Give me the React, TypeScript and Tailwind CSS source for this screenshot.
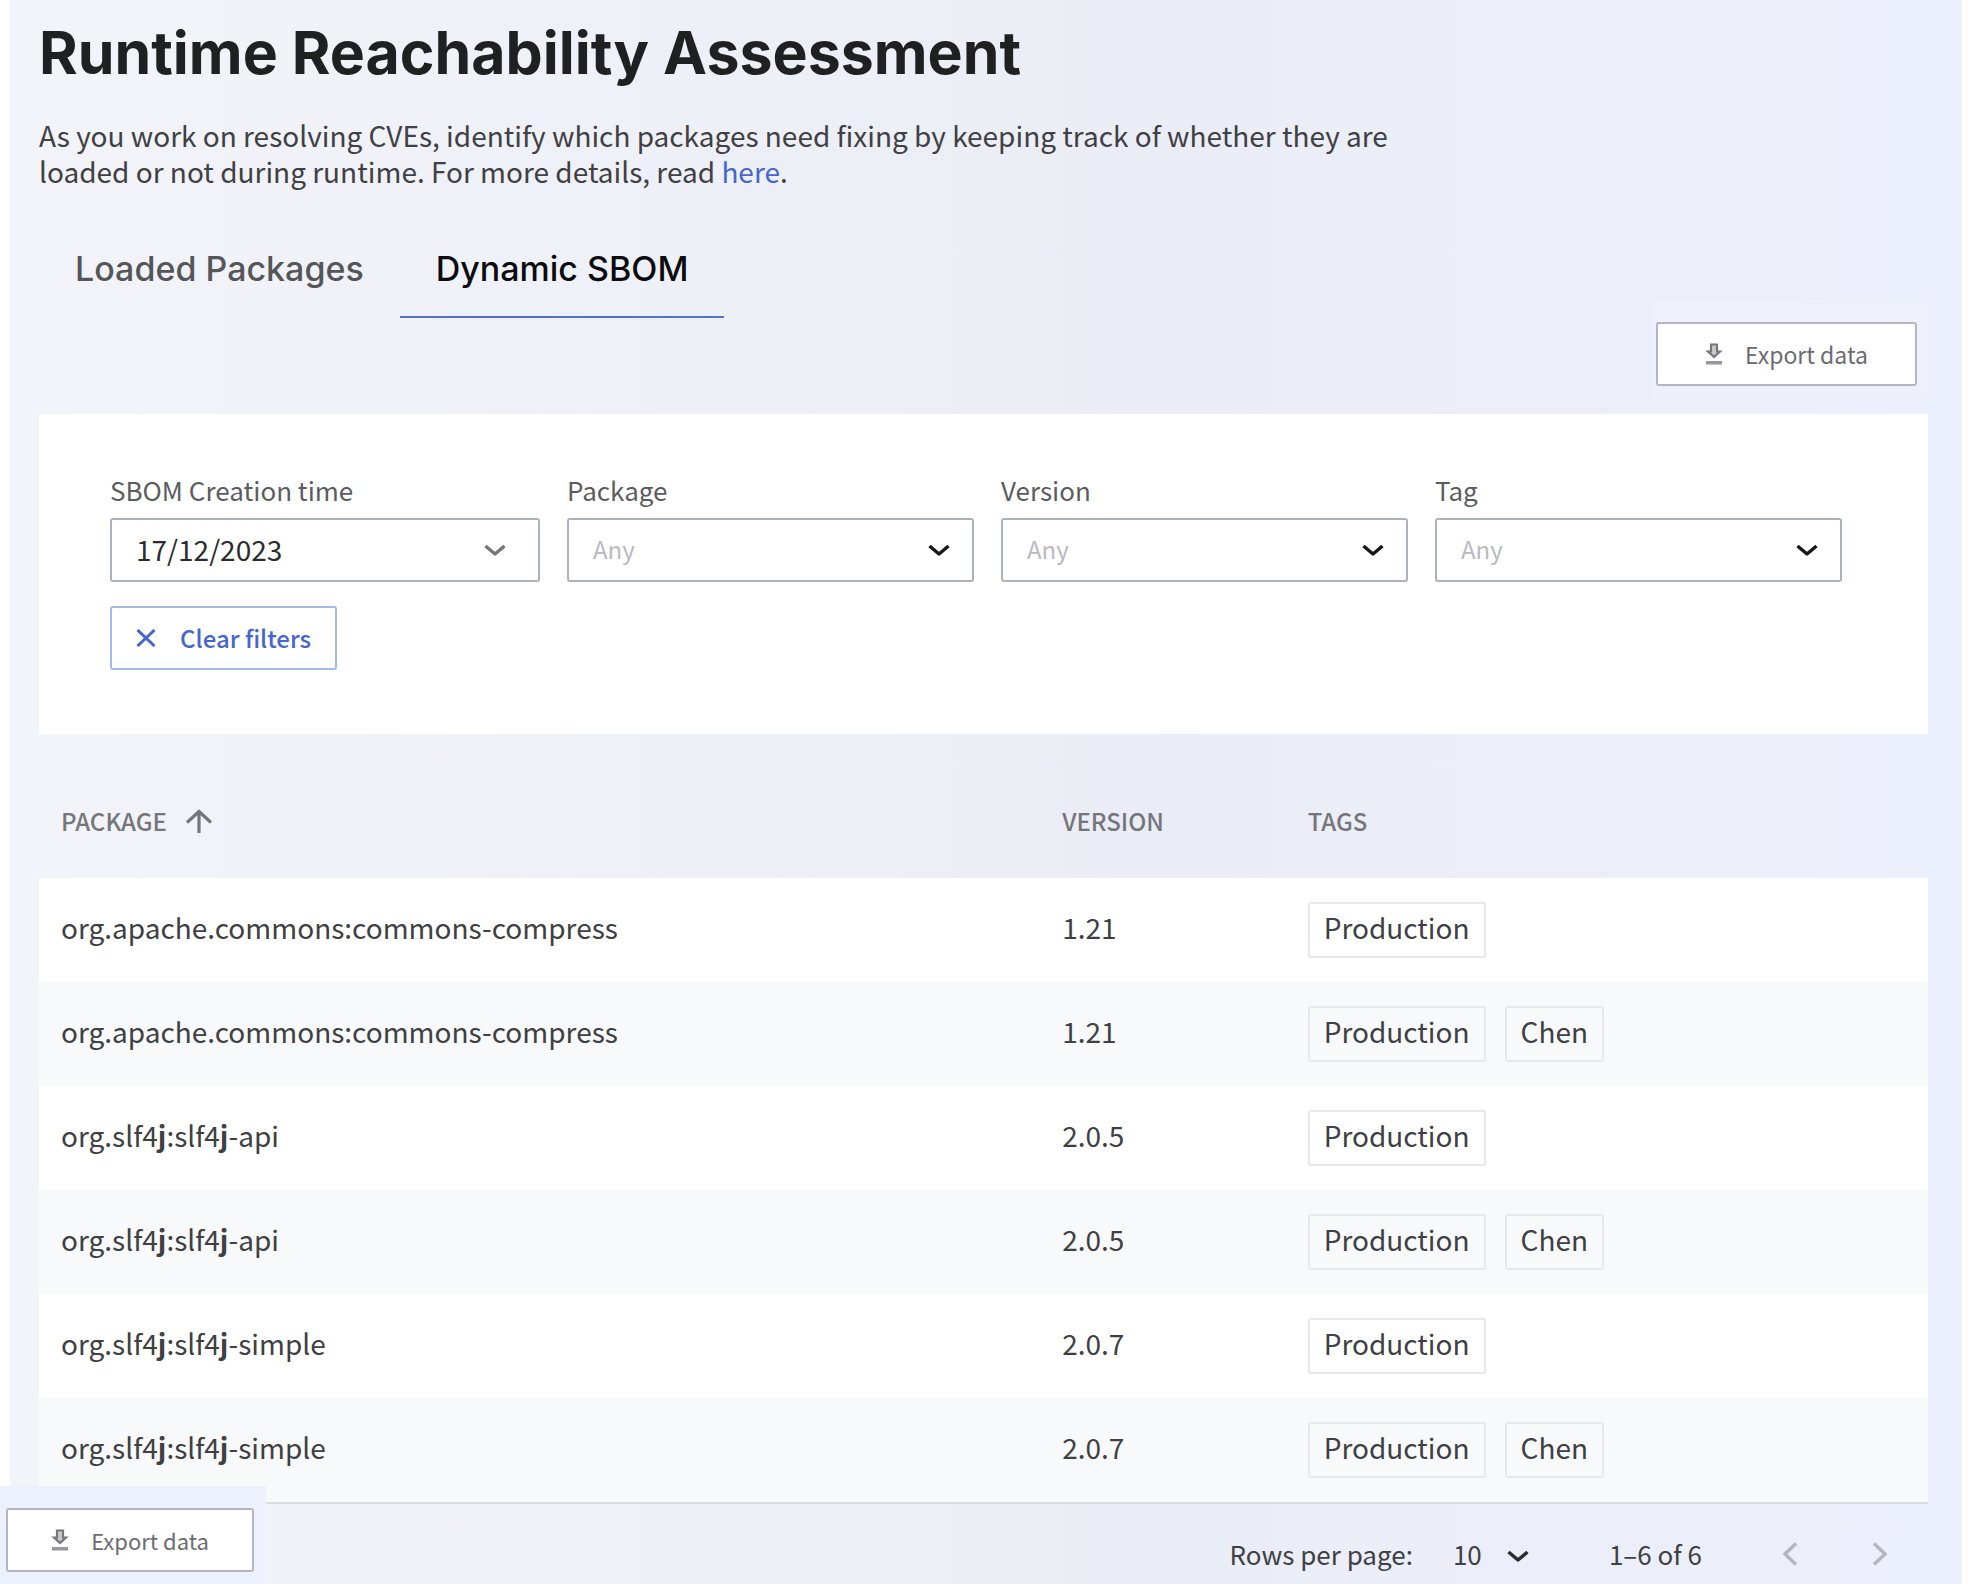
import { useState, type ReactNode } from "react";

const cjk = "font-['Noto_Sans_CJK_SC',sans-serif]";

function ChevronDown({ className }: { className: string }) {
  return (
    <svg
      viewBox="0 0 22 13"
      fill="none"
      stroke="currentColor"
      strokeWidth="3.5"
      className={`pointer-events-none absolute h-[13px] w-[22px] ${className}`}
      aria-hidden="true"
    >
      <path d="M1.500 2 11 10 20.500 2" strokeLinejoin="round" />
    </svg>
  );
}

function DownloadIcon() {
  return (
    <svg viewBox="0 0 18 24" className="h-6 w-[18px] shrink-0" aria-hidden="true">
      <path d="M6 2.500h6v7h3L9 15 3 9.500h3z" fill="#c9c9cd" stroke="#77777b" strokeWidth="2.200" />
      <path d="M1 19h16v3.500H1z" fill="#97979b" />
    </svg>
  );
}

function ExportButton({ className }: { className: string }) {
  return (
    <button
      type="button"
      className={`flex h-16 items-center justify-center gap-[22px] rounded-[3px] border-2 border-[#b5b4c2] bg-white leading-7 text-[#6c6c70] ${className}`}
    >
      <DownloadIcon />
      <span>Export data</span>
    </button>
  );
}

function Filter({ id, label, value, dark }: { id: string; label: string; value: string; dark?: boolean }) {
  return (
    <div className="flex min-w-0 flex-col gap-2.5">
      <label htmlFor={id} className="text-[26px] leading-9 text-[#5c5c60]">
        {label}
      </label>
      <div className="relative">
        <select
          id={id}
          className={`h-16 w-full appearance-none rounded-[3px] border-2 border-[#adb0be] bg-white px-6 pb-0.5 ${dark ? "text-[28px] text-[#2b2b2d]" : "text-2xl text-[#b9b9c2]"}`}
        >
          <option>{value}</option>
        </select>
        <ChevronDown className={`top-[26px] ${dark ? "right-[34px] text-[#77777b]" : "right-6 text-[#18181a]"}`} />
      </div>
    </div>
  );
}

function Tab({ active, onClick, children }: { active: boolean; onClick: () => void; children: ReactNode }) {
  return (
    <button
      type="button"
      role="tab"
      aria-selected={active}
      onClick={onClick}
      className={`h-[98px] border-b-2 px-9 pt-0.5 font-['Inter',sans-serif] text-[34px] leading-10 font-medium ${active ? "border-[#5470cc] text-[#0c0c0e]" : "border-transparent text-[#55565a]"}`}
    >
      {children}
    </button>
  );
}

const rows = [
  { name: "org.apache.commons:commons-compress", version: "1.21", tags: ["Production"] },
  { name: "org.apache.commons:commons-compress", version: "1.21", tags: ["Production", "Chen"] },
  { name: "org.slf4j:slf4j-api", version: "2.0.5", tags: ["Production"] },
  { name: "org.slf4j:slf4j-api", version: "2.0.5", tags: ["Production", "Chen"] },
  { name: "org.slf4j:slf4j-simple", version: "2.0.7", tags: ["Production"] },
  { name: "org.slf4j:slf4j-simple", version: "2.0.7", tags: ["Production", "Chen"] },
];

function PackageName({ name }: { name: string }) {
  return <>{name.split(/(j)/).map((part, i) => (part === "j" ? <b key={i}>j</b> : part))}</>;
}

export default function App() {
  const [tab, setTab] = useState("sbom");
  return (
    <div className={`relative bg-white px-2.5 ${cjk}`}>
      <main className="bg-linear-to-r from-[#f2f4f9] via-[#ebedf6] via-60% to-[#ecf0fc] pr-[34px] pl-[29px]">
        <header className="pt-[23px]">
          <h1 className="font-['Inter',sans-serif] text-[59px] leading-[60px] font-bold text-[#1f2021]">
            Runtime Reachability Assessment
          </h1>
          <p className="mt-[34px] max-w-[1360px] text-[28px] leading-9 text-[#3f4043]">
            As you work on resolving CVEs, identify which packages need fixing by keeping track of whether they are
            loaded or not during runtime. For more details, read{" "}
            <a href="#docs" className="text-[#4565cf]">
              here
            </a>
            .
          </p>
        </header>
        <div role="tablist" className="mt-[31px] flex">
          <Tab active={tab === "loaded"} onClick={() => setTab("loaded")}>
            Loaded Packages
          </Tab>
          <Tab active={tab === "sbom"} onClick={() => setTab("sbom")}>
            Dynamic SBOM
          </Tab>
        </div>
        <div className="-mt-[18px] flex justify-end">
          <div className="bg-[#eef0fc] pt-[22px] pr-[11px] pb-3 pl-[5px]">
            <ExportButton className="w-[261px] text-[23px]" />
          </div>
        </div>
        <section className="mt-4 h-80 bg-white pt-[58px] pr-[86px] pl-[71px]">
          <div className="grid grid-cols-[430fr_407fr_407fr_407fr] gap-[27px]">
            <Filter id="created" label="SBOM Creation time" value="17/12/2023" dark />
            <Filter id="package" label="Package" value="Any" />
            <Filter id="version" label="Version" value="Any" />
            <Filter id="tag" label="Tag" value="Any" />
          </div>
          <button
            type="button"
            className="mt-6 flex h-16 items-center gap-6 rounded-[3px] border-2 border-[#a5b8ea] bg-white px-6 text-2xl leading-7 font-medium text-[#4565cf]"
          >
            <svg viewBox="0 0 20 18" className="h-[18px] w-5" stroke="currentColor" strokeWidth="3" aria-hidden="true">
              <path d="M1.500 1 18.500 17M18.500 1 1.500 17" />
            </svg>
            Clear filters
          </button>
        </section>
        <table className="w-full table-fixed border-collapse text-left text-[#3f4043]">
          <colgroup>
            <col className="w-[53%]" />
            <col className="w-[13%]" />
            <col />
          </colgroup>
          <thead>
            <tr className="h-36 text-2xl leading-8 text-[#75767c]">
              <th scope="col" className="pt-[30px] pb-0 pl-[22px] font-medium">
                <button type="button" className="flex items-center gap-[18px]">
                  PACKAGE
                  <svg viewBox="0 0 28 24" className="h-6 w-7" fill="none" stroke="currentColor" strokeWidth="3.200" aria-hidden="true">
                    <path d="M14 24V2.500M2 13.500 14 2.500 26 13.500" />
                  </svg>
                </button>
              </th>
              <th scope="col" className="pt-[30px] pl-[22px] font-medium">VERSION</th>
              <th scope="col" className="pt-[30px] pl-[22px] font-medium">TAGS</th>
            </tr>
          </thead>
          <tbody className="text-[28px] leading-9">
            {rows.map((row, i) => (
              <tr key={i} className="h-[104px] bg-white even:bg-[#f8f9fb]">
                <td className="pb-1.5 pl-[22px]">
                  <PackageName name={row.name} />
                </td>
                <td className="pb-1.5 pl-[22px]">{row.version}</td>
                <td className="pl-[22px]">
                  <div className="flex gap-[19px]">
                    {row.tags.map((tag) => (
                      <span key={tag} className="flex h-14 items-center rounded-[3px] border-2 border-[#e8e8ea] px-3.5 pb-1.5">
                        {tag}
                      </span>
                    ))}
                  </div>
                </td>
              </tr>
            ))}
          </tbody>
        </table>
        <footer className="flex h-[82px] items-center justify-end border-t-2 border-[#dcdcdc] pt-5 pr-10 text-[26px] leading-8 text-[#3f4043]">
          <label htmlFor="page-size">Rows per page:</label>
          <div className="relative ml-10">
            <select id="page-size" className="w-[76px] appearance-none bg-transparent">
              <option>10</option>
            </select>
            <ChevronDown className="top-3 right-0 text-[#2b2b2d]" />
          </div>
          <span className="ml-20">1–6 of 6</span>
          <button type="button" aria-label="Previous page" className="ml-20">
            <svg viewBox="0 0 16 24" className="h-6 w-4" fill="none" stroke="#b4b6bd" strokeWidth="3.500" aria-hidden="true">
              <path d="M14 1.500 3 12 14 22.500" />
            </svg>
          </button>
          <button type="button" aria-label="Next page" className="ml-[74px]">
            <svg viewBox="0 0 16 24" className="h-6 w-4" fill="none" stroke="#b4b6bd" strokeWidth="3.500" aria-hidden="true">
              <path d="M2 1.500 13 12 2 22.500" />
            </svg>
          </button>
        </footer>
      </main>
      <div className="absolute bottom-0 left-0 bg-[#edf0fd] pt-[22px] pr-3 pb-3 pl-1.5">
        <ExportButton className="w-[248px] text-[22px]" />
      </div>
    </div>
  );
}
